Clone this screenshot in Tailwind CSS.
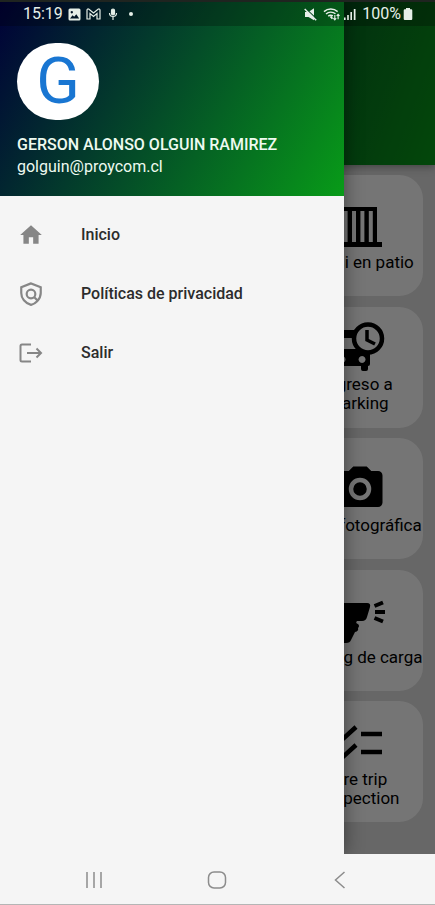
<!DOCTYPE html>
<html lang="es">
<head>
<meta charset="utf-8">
<meta name="viewport" content="width=device-width, initial-scale=1">
<title>Inicio</title>
<script src="https://cdn.jsdelivr.net/npm/@tailwindcss/browser@4"></script>
</head>
<body class="flex min-h-screen flex-col bg-[#f5f5f5] font-['Roboto','Noto_Sans',sans-serif]">
<div class="relative flex flex-1 flex-col overflow-hidden bg-[#e0e0e0]">

  <!-- Status bar -->
  <div class="absolute inset-x-0 top-0 z-30 flex h-[26px] items-center justify-between border-t-2 border-[#1f2420] bg-black/25 pl-[23px] pr-[22px] text-base text-[#e6efe8]">
    <div class="flex items-center gap-[5px]">
      <span>15:19</span>
      <svg class="size-[13px]" viewBox="0 0 13 13" fill="currentColor" aria-hidden="true"><path fill-rule="evenodd" d="M2 .5h9A1.500 1.500 0 0 1 12.500 2v9a1.500 1.500 0 0 1-1.500 1.500H2A1.500 1.500 0 0 1 .5 11V2A1.500 1.500 0 0 1 2 .5ZM2 10.500h9.200L8.300 6.300 6.200 8.800 4.600 7.200ZM3.800 3a1.200 1.200 0 1 0 .01 0Z"/></svg>
      <svg class="h-3 w-[15px]" viewBox="0 0 15 12" fill="none" stroke="currentColor" stroke-width="1.200" aria-hidden="true"><path d="M1 11V2Q1.500.3 3 1.200L7.500 5 12 1.200Q13.500.3 14 2V11H11V5.500L7.500 8.500 4 5.500V11Z"/></svg>
      <svg class="ml-0.5 h-3 w-[10px]" viewBox="0 0 10 12" fill="none" stroke="currentColor" stroke-width="1.200" aria-hidden="true"><rect x="3.500" y="1" width="3" height="6" rx="1.500" fill="currentColor"/><path d="M1.500 5a3.500 3.500 0 0 0 7 0M5 8.500V12"/></svg>
      <span class="ml-1.5 size-1 rounded-full bg-current"></span>
    </div>
    <div class="flex items-center">
      <svg class="mr-1.5 size-[13px]" viewBox="0 0 13 13" aria-hidden="true"><path d="M1 4H4.500L10 .3V12.300L4.500 9H1Z" fill="currentColor"/><path d="M1.500 .3 13 11.300" stroke="#00461c" stroke-width="1.200"/><path d="M.7 1 12.200 12.200" stroke="currentColor" stroke-width="1.500"/></svg>
      <svg class="mr-1 h-[14px] w-[17px]" viewBox="0 0 18 14" fill="none" stroke="currentColor" stroke-width="1.500" aria-hidden="true"><path d="M1 4.500a11 11 0 0 1 14.500 0M3.200 7a7.500 7.500 0 0 1 10-.2M5.500 9.300a4.500 4.500 0 0 1 5-.3"/><path d="M8 9.500 10 12" stroke-width="2"/><path d="M12.500 8v5M11 11.500l1.500 1.700 1.500-1.700M16 12.500V7.500M14.500 9 16 7.300 17.500 9" stroke-width="1.200"/></svg>
      <svg class="mr-1.5 h-3 w-3" viewBox="0 0 12 12" fill="currentColor" aria-hidden="true"><path d="M0 9.500h1.600V12H0ZM3.200 7h1.600v5H3.200ZM6.400 4H8v8H6.400ZM9.800 1h1.700v11H9.800Z"/></svg>
      <span>100%</span>
      <svg class="ml-0.5 h-3 w-[10px]" viewBox="0 0 10 12" fill="currentColor" aria-hidden="true"><path d="M3 0h4v1.300h1.200Q9.300 1.300 9.300 2.500v8.300Q9.300 12 8.200 12H1.800Q.7 12 .7 10.800V2.500Q.7 1.300 1.800 1.300H3Z"/></svg>
    </div>
  </div>

  <!-- Home screen -->
  <header class="h-[165px] bg-linear-[111deg,#000038,#089b18] shadow-[0_2px_8px_rgba(0,0,0,0.35)]"></header>
  <main class="flex flex-1 flex-col items-end justify-between pt-2.5 pr-3 pb-8 text-center text-[17px] leading-[19px] text-black">
    <button class="flex h-[121px] w-[126px] flex-col items-center justify-center rounded-[24px] bg-white">
      <svg class="size-[54px]" viewBox="0 0 54 54" aria-hidden="true"><path fill-rule="evenodd" d="M10 8H44V43H49V48H5V43H10ZM10.600 12V43H14.600V12ZM19 12V43H23V12ZM27.400 12V43H31.400V12ZM35.800 12V43H39.800V12Z"/></svg>
      <span class="whitespace-nowrap">Chasi en patio</span>
    </button>
    <button class="flex h-[121px] w-[126px] flex-col items-center justify-center rounded-[24px] bg-white">
      <svg class="size-[54px]" viewBox="0 0 54 54" aria-hidden="true"><path fill-rule="evenodd" d="M8 9H30V17H9L6 28H37V43Q37 45 35 45V48Q35 50 33 50H30Q28 50 28 48V45H9V48Q9 50 7 50H4Q2 50 2 48V28L7 11Q7 9 8 9ZM29 35a3.500 3.500 0 1 0 .1 0ZM9 35a3.500 3.500 0 1 0 .1 0Z"/><circle cx="35" cy="17.500" r="14" fill="#fff" stroke="#000" stroke-width="4.500"/><path d="M34 9V19L42 23" fill="none" stroke="#000" stroke-width="3.500"/></svg>
      <span>Egreso a<br>Parking</span>
    </button>
    <button class="flex h-[121px] w-[126px] flex-col items-center justify-center rounded-[24px] bg-white">
      <svg class="size-[54px]" viewBox="0 0 24 24" aria-hidden="true"><path d="M4,4H7L9,2H15L17,4H20A2,2 0 0,1 22,6V18A2,2 0 0,1 20,20H4A2,2 0 0,1 2,18V6A2,2 0 0,1 4,4M12,7A5,5 0 0,0 7,12A5,5 0 0,0 12,17A5,5 0 0,0 17,12A5,5 0 0,0 12,7M12,9A3,3 0 0,1 15,12A3,3 0 0,1 12,15A3,3 0 0,1 9,12A3,3 0 0,1 12,9Z"/></svg>
      <span class="whitespace-nowrap">Insp. fotográfica</span>
    </button>
    <button class="flex h-[121px] w-[126px] flex-col items-center justify-center rounded-[24px] bg-white">
      <svg class="size-[54px]" viewBox="0 0 54 54" aria-hidden="true"><path d="M8 9H34Q38 9 37 13L34 23Q33 27 29 27H24Q22 29 25 30Q27 32 25 34Q26 37 22 38L18 46Q17 49 13 49H6Q3 49 4 45L8 30Q2 26 2 18T8 9Z"/><path d="M41.500 12 50 8.500M42 18H52M41.500 24 50 27.500" stroke="#000" stroke-width="4"/></svg>
      <span class="whitespace-nowrap">Picking de carga</span>
    </button>
    <button class="flex h-[121px] w-[126px] flex-col items-center justify-center rounded-[24px] bg-white">
      <svg class="size-[54px]" viewBox="0 0 54 54" fill="none" stroke="#000" stroke-width="4.500" aria-hidden="true"><path d="M28 18H49M28 36H49"/><path d="M5 16 11 22 23 11M5 34 11 40 23 29"/></svg>
      <span>Pre trip<br>Inspection</span>
    </button>
  </main>
  <div class="absolute inset-0 z-10 bg-black/54"></div>

  <!-- Navigation drawer -->
  <aside class="absolute inset-y-0 left-0 z-20 w-[79%] bg-[#f5f5f5] shadow-[0_0_18px_rgba(0,0,0,0.45)]">
    <div class="flex h-[196px] flex-col bg-linear-[120deg,#000038,#089b18] px-[17px] pt-[43px] text-base leading-[22px] text-[#eefaf0]">
      <div class="flex h-[77px] w-[82px] items-center justify-center rounded-full bg-white text-[64px] text-[#1976d2]">G</div>
      <p class="mt-[14px] whitespace-nowrap font-medium">GERSON ALONSO OLGUIN RAMIREZ</p>
      <p>golguin@proycom.cl</p>
    </div>
    <nav class="flex flex-col pt-[9px] text-base font-medium text-[#2c2c2c]">
      <a href="#" class="flex h-[59px] items-center gap-[37px] pl-[18px]">
        <svg class="size-[26px] text-[#868686]" viewBox="0 0 24 24" fill="currentColor" aria-hidden="true"><path d="M10 20v-6h4v6h5v-8h3L12 3 2 12h3v8z"/></svg>
        <span>Inicio</span>
      </a>
      <a href="#" class="flex h-[59px] items-center gap-[37px] pl-[18px]">
        <svg class="size-[26px] text-[#868686]" viewBox="0 0 24 24" fill="none" stroke="currentColor" stroke-width="2" aria-hidden="true"><path d="M12 2.200 3 5.700V11c0 5 3.500 9.500 9 11 2.300-.6 4.200-1.800 5.700-3.400 2-2.100 3.300-4.800 3.300-7.600V5.700Z"/><circle cx="12" cy="12" r="4"/><path d="M14.800 14.800 18.500 18.500"/></svg>
        <span>Políticas de privacidad</span>
      </a>
      <a href="#" class="flex h-[59px] items-center gap-[37px] pl-[18px]">
        <svg class="size-[26px] text-[#868686]" viewBox="0 0 26 26" fill="none" stroke="currentColor" stroke-width="2" aria-hidden="true"><path d="M13 4.500H4Q2.500 4.500 2.500 6V20Q2.500 21.500 4 21.500H13M9 13H23M18.500 8.500 23 13 18.500 17.500"/></svg>
        <span>Salir</span>
      </a>
    </nav>
  </aside>
</div>

<!-- System navigation -->
<footer class="flex h-[51px] items-center justify-around border-b border-[#b5b5b5] bg-[#f5f5f5] pt-0.5 pr-[34px] pl-8 text-[#8c8c8c]">
  <button aria-label="Recientes"><svg class="size-5" viewBox="0 0 20 20" fill="none" stroke="currentColor" stroke-width="1.500" aria-hidden="true"><path d="M3 2V18M10 2V18M17 2V18"/></svg></button>
  <button aria-label="Inicio"><svg class="size-5" viewBox="0 0 20 20" fill="none" stroke="currentColor" stroke-width="1.500" aria-hidden="true"><rect x="1.500" y="2" width="17" height="16" rx="5.500"/></svg></button>
  <button aria-label="Atrás"><svg class="size-5" viewBox="0 0 20 20" fill="none" stroke="currentColor" stroke-width="1.500" aria-hidden="true"><path d="M14.500 2 5.500 10 14.500 18"/></svg></button>
</footer>
</body>
</html>
